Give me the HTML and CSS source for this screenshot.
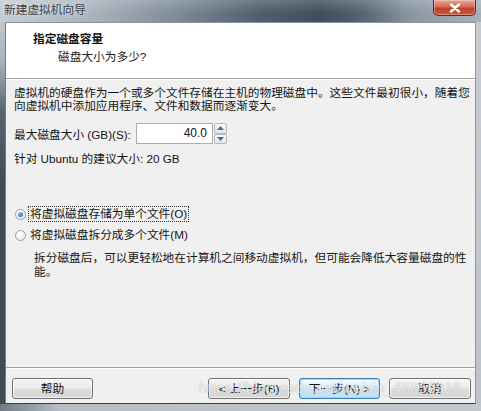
FILE: index.html
```html
<!DOCTYPE html>
<html lang="zh-CN">
<head>
<meta charset="utf-8">
<title>新建虚拟机向导</title>
<link rel="stylesheet" href="styles.css">
</head>
<body>
<div class="window">
  <div class="titlebar">
    <span class="title">新建虚拟机向导</span>
    <div class="close">
      <svg width="14" height="10" viewBox="0 0 14 10"><path d="M3 1.5 L11 8.5 M11 1.5 L3 8.5" stroke="#fff" stroke-width="2.4" stroke-linecap="round"/></svg>
    </div>
  </div>
  <div class="frame-row">
    <div class="frame-left"></div>
    <div class="client">
      <div class="header">
        <div class="h-title">指定磁盘容量</div>
        <div class="h-sub">磁盘大小为多少?</div>
      </div>
      <div class="body">
        <p class="para">虚拟机的硬盘作为一个或多个文件存储在主机的物理磁盘中。这些文件最初很小，随着您<br>向虚拟机中添加应用程序、文件和数据而逐渐变大。</p>
        <div class="size-row">
          <span class="label">最大磁盘大小 (GB)(S):</span>
          <div class="spin">
            <div class="spin-input">40.0</div>
            <div class="spin-btns">
              <div class="spin-btn"><svg width="7" height="4" viewBox="0 0 7 4"><path d="M0 4 L3.5 0 L7 4Z" fill="#4d6b8a"/></svg></div>
              <div class="spin-btn"><svg width="7" height="4" viewBox="0 0 7 4"><path d="M0 0 L3.5 4 L7 0Z" fill="#4d6b8a"/></svg></div>
            </div>
          </div>
        </div>
        <div class="hint">针对 Ubuntu 的建议大小: 20 GB</div>
        <div class="radio-row first">
          <span class="radio checked"></span>
          <span class="radio-text focus">将虚拟磁盘存储为单个文件(O)</span>
        </div>
        <div class="radio-row second">
          <span class="radio"></span>
          <span class="radio-text">将虚拟磁盘拆分成多个文件(M)</span>
        </div>
        <p class="desc">拆分磁盘后，可以更轻松地在计算机之间移动虚拟机，但可能会降低大容量磁盘的性<br>能。</p>
      </div>
      <div class="footer">
        <div class="btn help">帮助</div>
        <div class="nav">
          <div class="btn">&lt; 上一步(B)</div>
          <div class="btn default">下一步(N) &gt;</div>
          <div class="btn">取消</div>
        </div>
        <div class="watermark">https://blog.csdn.net/weixin_45859916</div>
      </div>
    </div>
    <div class="frame-right"></div>
  </div>
  <div class="frame-bottom"></div>
</div>
</body>
</html>
```
FILE: styles.css
```css
* { box-sizing: border-box; }
html, body { margin: 0; padding: 0; }
body {
  width: 481px;
  height: 411px;
  overflow: hidden;
  font-family: "Liberation Sans", "Noto Sans CJK SC", sans-serif;
  font-size: 11.7px;
  color: #141414;
  background: #b9c1c8;
}
.window {
  width: 481px;
  height: 411px;
  display: flex;
  flex-direction: column;
}
.titlebar {
  height: 22px;
  flex: none;
  display: flex;
  align-items: flex-start;
  justify-content: space-between;
  background:
    linear-gradient(to bottom, rgba(255,255,255,0.18), rgba(255,255,255,0) 60%),
    linear-gradient(to right, #c4ccd3 0, #aab4be 90px, #7c8997 180px, #4f5f6d 260px, #3e4e5c 320px, #526270 360px, #8996a2 410px, #a7b1ba 481px);
}
.title {
  margin: 3px 0 0 4px;
  line-height: 14px;
  color: #3a3f46;
  text-shadow: 0 0 4px rgba(255,255,255,0.8);
}
.close {
  width: 43px;
  height: 16px;
  margin-right: 5px;
  border: 1px solid #5f2a22;
  border-top: none;
  border-radius: 0 0 5px 5px;
  background: linear-gradient(to bottom, #e3a596 0, #d46a54 45%, #c2412b 55%, #c9573f 100%);
  display: flex;
  align-items: center;
  justify-content: center;
  box-shadow: inset 0 0 0 1px rgba(255,255,255,0.3);
}
.frame-row {
  height: 382px;
  flex: none;
  display: flex;
}
.frame-left {
  width: 5px;
  flex: none;
  background: linear-gradient(to bottom, #c0c7ce 0, #a9b2bb 40px, #56646f 90px, #3f4d5a 160px, #3f4d5a 100%);
}
.frame-right {
  width: 5px;
  flex: none;
  background: linear-gradient(to bottom, #c6ccd2, #bcc3ca);
}
.frame-bottom {
  flex: 1;
  background: linear-gradient(to right, #6e7b86 0, #b6bec6 60px, #c2c9cf 100%);
}
.client {
  width: 471px;
  flex: none;
  background: #f0f0f0;
  border-left: 1px solid #6f7b86;
  border-top: 1px solid #8a949e;
  border-right: 1px solid #8f98a1;
  border-bottom: 1px solid #36424e;
  display: flex;
  flex-direction: column;
  position: relative;
}
.header {
  height: 56px;
  flex: none;
  background: #fff;
  border-bottom: 1px solid #a0a0a0;
  box-shadow: 0 1px 0 #fff;
  padding: 9px 0 0 27px;
}
.h-title {
  font-weight: bold;
  line-height: 14px;
  color: #111;
}
.h-sub {
  line-height: 14px;
  margin: 4px 0 0 25px;
  color: #222;
}
.body {
  flex: 1;
  padding: 7px 0 0 8px;
}
.para {
  margin: 0;
  line-height: 13px;
}
.size-row {
  margin-top: 11px;
  height: 21px;
  display: flex;
  align-items: center;
}
.label { width: 122px; }
.spin {
  display: flex;
  height: 21px;
}
.spin-input {
  width: 77px;
  height: 21px;
  background: #fff;
  border: 1px solid #abadb3;
  border-top-color: #a6a9b0;
  text-align: right;
  padding-right: 5px;
  font-size: 12px;
  line-height: 19px;
}
.spin-btns {
  width: 13px;
  display: flex;
  flex-direction: column;
  margin-left: 1px;
}
.spin-btn {
  flex: 1;
  border: 1px solid #b4b8bd;
  border-radius: 2px;
  background: linear-gradient(to bottom, #f6f7f8, #e3e6ea);
  display: flex;
  align-items: center;
  justify-content: center;
}
.hint {
  margin-top: 8px;
  line-height: 14px;
}
.radio-row {
  display: flex;
  align-items: center;
  height: 16px;
  padding-left: 1px;
}
.radio-row.first { margin-top: 40px; }
.radio-row.second { margin-top: 5px; }
.radio {
  width: 11px;
  height: 11px;
  border-radius: 50%;
  border: 1px solid #9a9ea4;
  background: radial-gradient(circle at 40% 35%, #fff, #e3e5e8);
  margin-right: 2px;
  display: flex;
  align-items: center;
  justify-content: center;
}
.radio.checked::after {
  content: "";
  width: 5px;
  height: 5px;
  border-radius: 50%;
  background: radial-gradient(circle at 35% 30%, #7fc0f0, #1a5aa8);
}
.radio-text {
  line-height: 14px;
  padding: 0 1px;
  border: 1px solid transparent;
}
.radio-text.focus { border: 1px dotted #333; }
.desc {
  margin: 8px 0 0 20px;
  line-height: 14px;
}
.footer {
  height: 36px;
  flex: none;
  border-top: 1px solid #a0a0a0;
  box-shadow: inset 0 1px 0 #fff;
  display: flex;
  justify-content: space-between;
  align-items: flex-start;
  padding: 10px 4px 0 6px;
  position: relative;
}
.nav { display: flex; gap: 9px; }
.btn {
  width: 82px;
  height: 21px;
  border: 1px solid #707070;
  border-radius: 3px;
  background: linear-gradient(to bottom, #f4f4f4 0, #ececec 45%, #dedede 55%, #d4d4d4 100%);
  box-shadow: inset 0 0 0 1px rgba(255,255,255,0.7);
  text-align: center;
  line-height: 19px;
  color: #111;
}
.btn.help { width: 81px; }
.btn.default {
  width: 81px;
  border-color: #3c7fb1;
  box-shadow: inset 0 0 0 1px #9fdcf8;
  background: linear-gradient(to bottom, #f2f9fd 0, #e2f1fb 45%, #cfe8f8 55%, #bde0f5 100%);
}
.watermark {
  position: absolute;
  left: 193px;
  top: 11px;
  font-family: "Liberation Sans", sans-serif;
  font-size: 15px;
  line-height: 18px;
  color: rgba(255,255,255,0.7);
  text-shadow: 0 0 1px rgba(120,120,120,0.6);
  letter-spacing: 0.2px;
  pointer-events: none;
}
```
